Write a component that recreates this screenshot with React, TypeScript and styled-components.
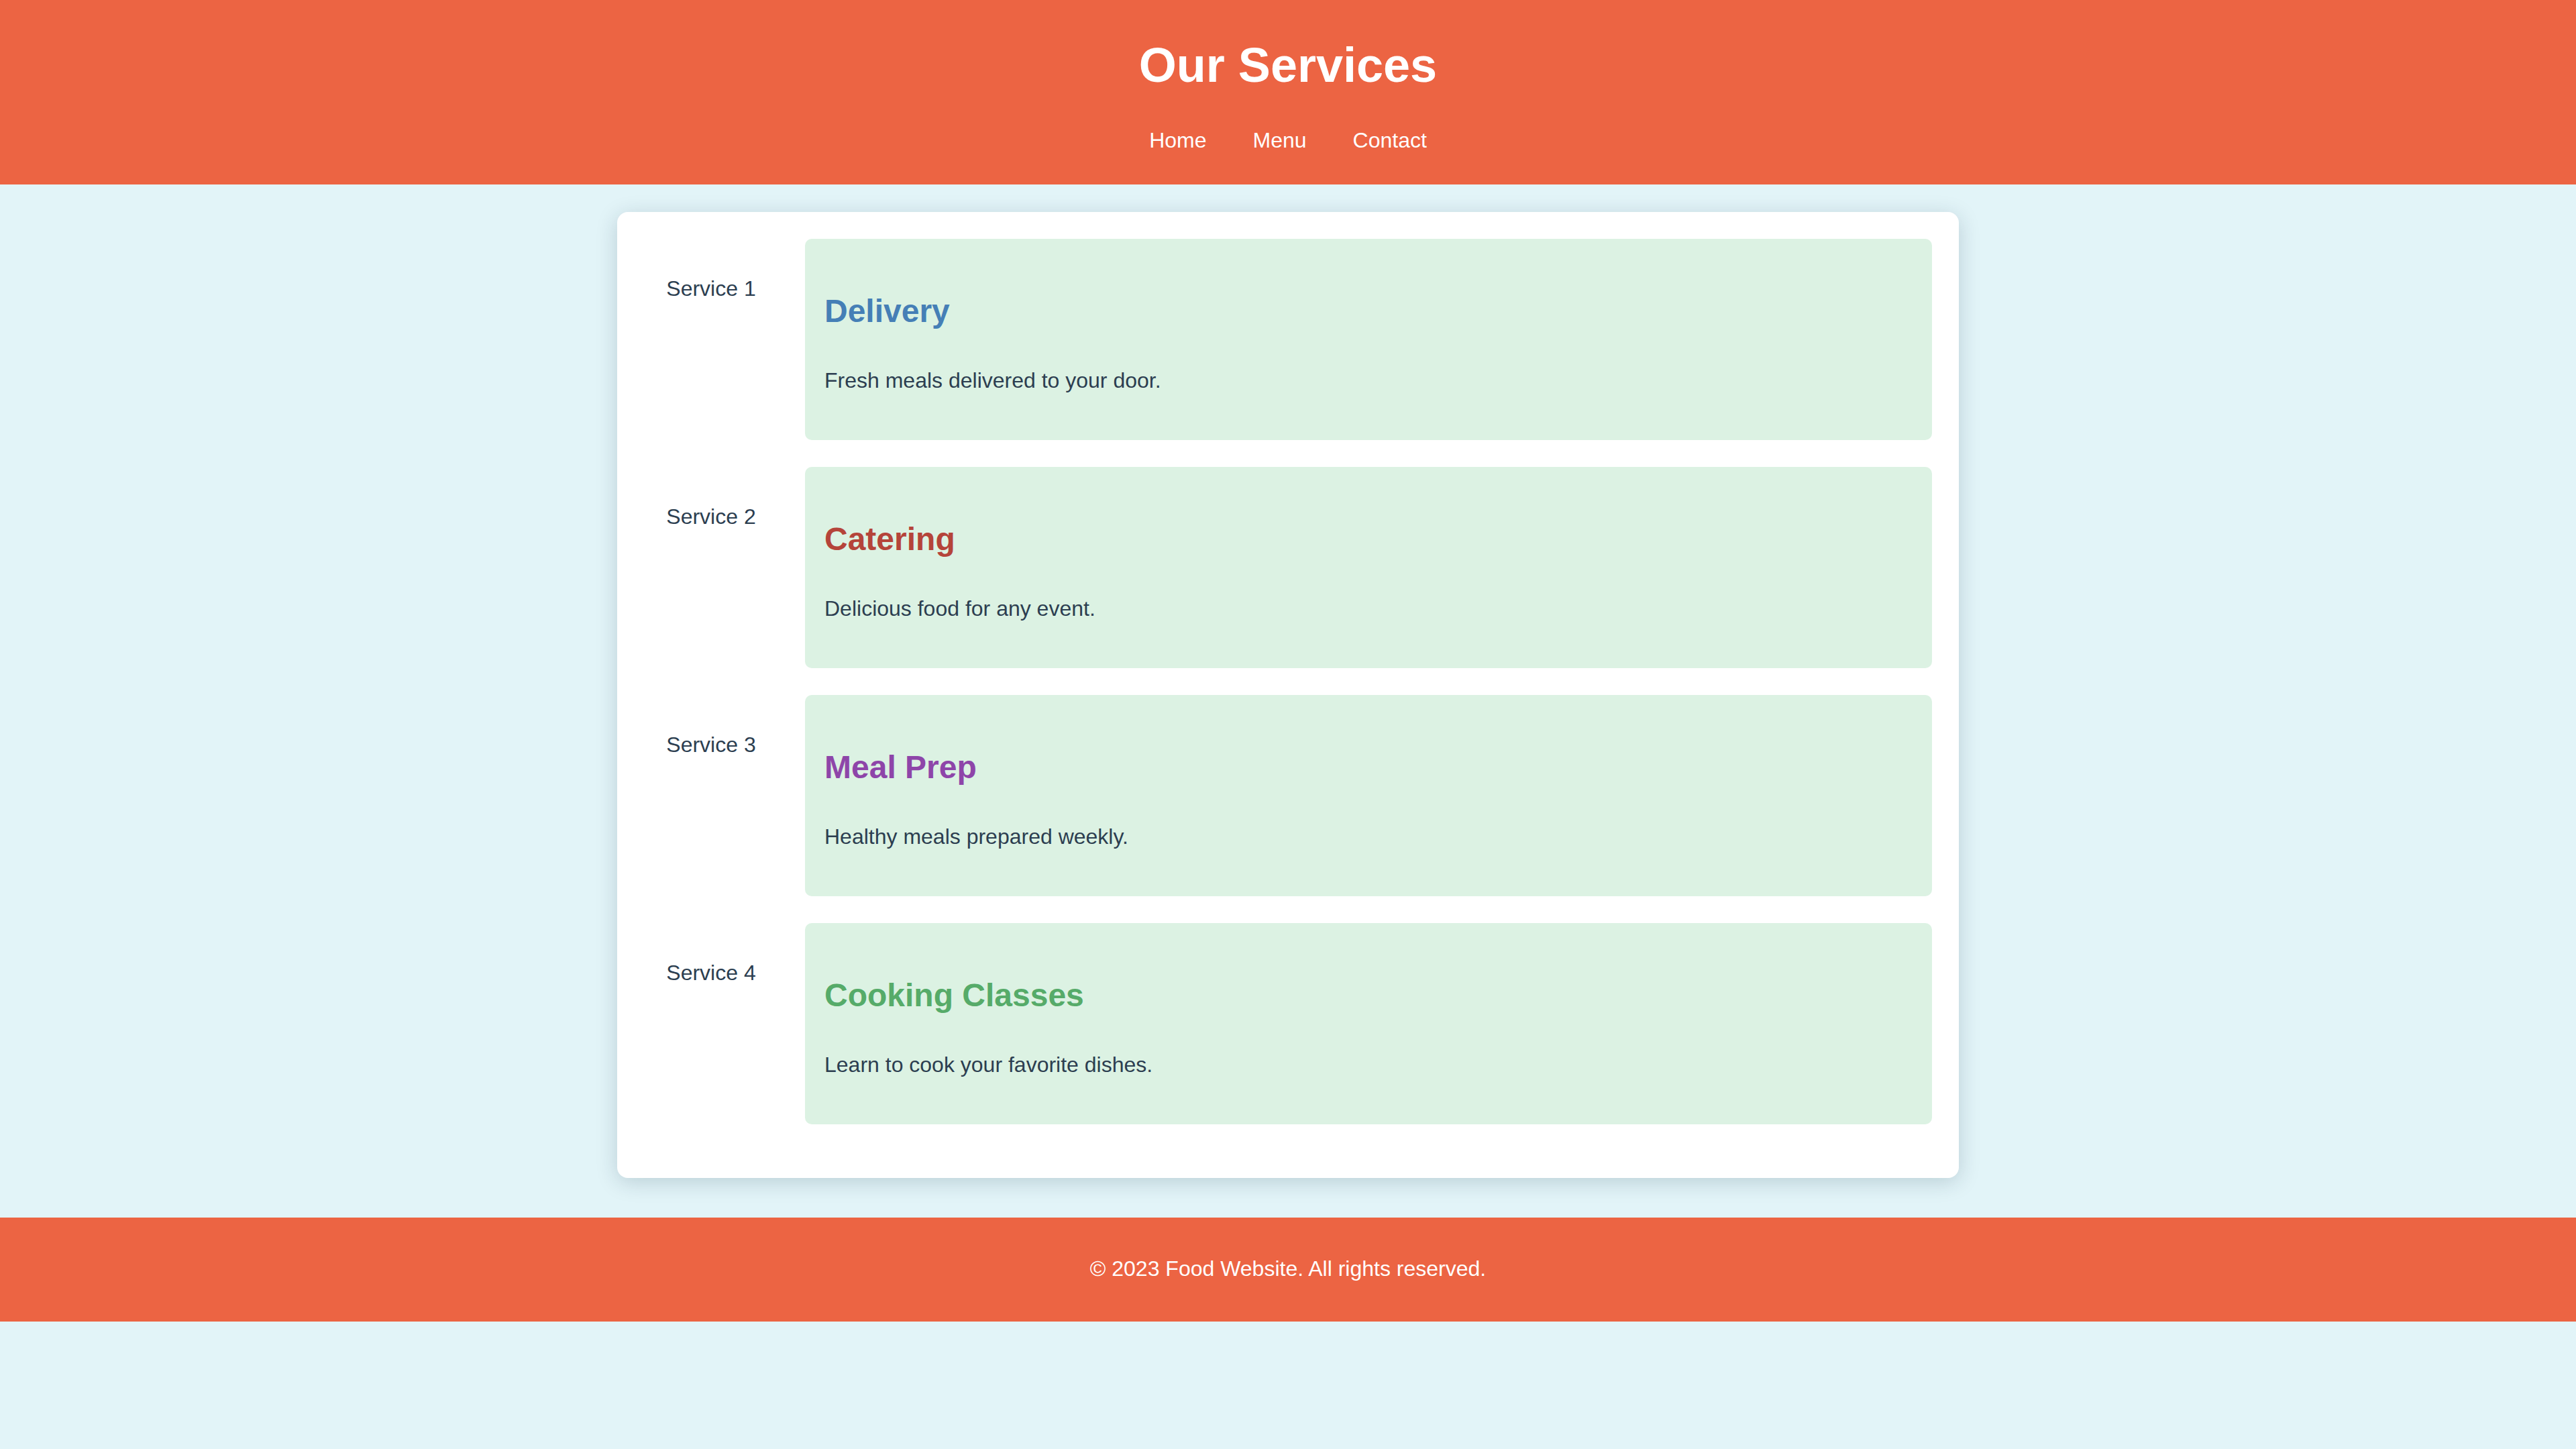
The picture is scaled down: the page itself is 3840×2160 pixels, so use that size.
import * as React from 'react';
import styled, { createGlobalStyle } from 'styled-components';

const GlobalStyle = createGlobalStyle`
    html, body {
        margin: 0;
        padding: 0;
    }
    body {
        background-color: #e2f4f8;
        font-family: 'Liberation Sans', Arial, Helvetica, sans-serif;
        color: #2c3e50;
    }
`;

const Header = styled.header`
    background-color: #ec6443;
    color: #fff;
    text-align: center;
    padding: 57px 0 47px;
`;
const Title = styled.h1`
    margin: 0;
    font-size: 72px;
    line-height: 80px;
    font-weight: 700;
`;
const Nav = styled.nav`
    margin-top: 54px;
    display: flex;
    justify-content: center;
    gap: 69px;
`;
const NavLink = styled.a`
    color: #fff;
    text-decoration: none;
    font-size: 32px;
    line-height: 37px;
`;

const Main = styled.main`
    padding: 41px 0 59px;
`;
const Card = styled.div`
    width: 2000px;
    box-sizing: border-box;
    margin: 0 auto;
    padding: 40px;
    background-color: #fff;
    border-radius: 16px;
    box-shadow: 0 6px 32px rgba(0, 40, 60, 0.18);
    overflow: hidden;
`;
const ServiceItem = styled.div`
    display: flex;
    gap: 40px;
    margin-bottom: 40px;
`;
const ImageSlot = styled.div`
    width: 200px;
    flex-shrink: 0;
    padding-top: 56px;
    text-align: center;
    font-size: 32px;
    line-height: 37px;
    white-space: nowrap;
    overflow: hidden;
    color: #2c3e50;
`;
const ServiceBody = styled.div`
    flex: 1;
    background-color: #dcf2e3;
    border-radius: 10px;
    padding: 30px 29px;
`;
const ServiceTitle = styled.h3<{ tone: string }>`
    margin: 50px 0 0;
    font-size: 48px;
    line-height: 56px;
    font-weight: 700;
    color: ${props => props.tone};
`;
const ServiceText = styled.p`
    margin: 55px 0 39px;
    font-size: 32px;
    line-height: 40px;
    color: #2c3e50;
`;

const Footer = styled.footer`
    background-color: #ec6443;
    color: #fff;
    text-align: center;
    padding: 58px 0 60px;
    font-size: 32px;
    line-height: 37px;
`;

const services = [
    { alt: 'Service 1', title: 'Delivery', text: 'Fresh meals delivered to your door.', tone: '#457fb6' },
    { alt: 'Service 2', title: 'Catering', text: 'Delicious food for any event.', tone: '#b5443a' },
    { alt: 'Service 3', title: 'Meal Prep', text: 'Healthy meals prepared weekly.', tone: '#8e45a9' },
    { alt: 'Service 4', title: 'Cooking Classes', text: 'Learn to cook your favorite dishes.', tone: '#56ab69' },
];

const App = () => {
    return (
        <>
            <GlobalStyle />
            <Header>
                <Title>Our Services</Title>
                <Nav>
                    <NavLink href="#">Home</NavLink>
                    <NavLink href="#">Menu</NavLink>
                    <NavLink href="#">Contact</NavLink>
                </Nav>
            </Header>
            <Main>
                <Card>
                    {services.map(s => (
                        <ServiceItem key={s.title}>
                            <ImageSlot>{s.alt}</ImageSlot>
                            <ServiceBody>
                                <ServiceTitle tone={s.tone}>{s.title}</ServiceTitle>
                                <ServiceText>{s.text}</ServiceText>
                            </ServiceBody>
                        </ServiceItem>
                    ))}
                </Card>
            </Main>
            <Footer>© 2023 Food Website. All rights reserved.</Footer>
        </>
    );
};

export default App;
